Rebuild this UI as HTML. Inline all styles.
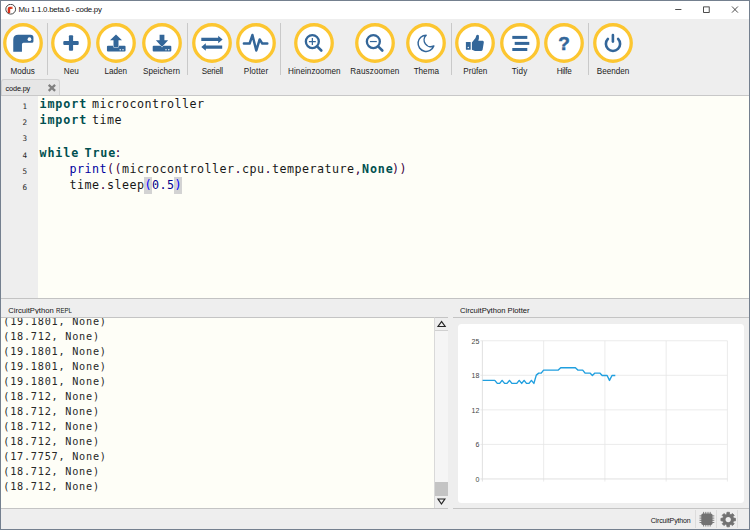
<!DOCTYPE html>
<html lang="de">
<head>
<meta charset="utf-8">
<title>Mu 1.1.0.beta.6 - code.py</title>
<style>
html,body{margin:0;padding:0;}
body{width:750px;height:530px;overflow:hidden;background:#eeeeee;font-family:"Liberation Sans",sans-serif;color:#1a1a1a;position:relative;}
.abs{position:absolute;}
#frame{position:absolute;left:0;top:0;width:748px;height:528px;border:1px solid #74808f;z-index:50;pointer-events:none;}
#titlebar{position:absolute;left:1px;top:1px;width:748px;height:18px;background:#fff;}
#title{position:absolute;left:17.6px;top:3.4px;letter-spacing:-0.256px;font-size:7.9px;line-height:12px;white-space:nowrap;color:#111;}
#toolbar{position:absolute;left:1px;top:19px;width:748px;height:60px;background:#eeeeee;}
.btn{position:absolute;top:4.15px;width:44px;height:56px;}
.btn svg{position:absolute;left:2px;top:0;width:40px;height:40px;overflow:visible;}
.btn span{position:absolute;left:-10px;right:-10px;top:42.6px;text-align:center;font-size:8.15px;line-height:12px;white-space:nowrap;color:#1c1c1c;}
.sep{position:absolute;top:4.4px;width:1px;height:52px;background:#c9c9c9;}
#tabbar{position:absolute;left:1px;top:79px;width:748px;height:17px;}
#tab{position:absolute;left:0.2px;top:0.3px;width:56.6px;height:16px;background:#e6e6e6;border:1px solid #d2d2d2;border-bottom:none;border-radius:3px 3px 0 0;}
#tab span{position:absolute;left:3.4px;top:3.6px;letter-spacing:-0.15px;font-size:7.3px;line-height:10px;color:#111;}
#tabline{position:absolute;left:1px;top:95px;width:748px;height:1px;background:#c8c8c8;}
#editor{position:absolute;left:1px;top:96px;width:748px;height:202px;background:#fefef7;overflow:hidden;}
#margin{position:absolute;left:0;top:0;width:36.7px;height:202px;background:#eeeeee;}
.ln{position:absolute;left:0;width:26.2px;text-align:right;font-family:"DejaVu Sans Mono","Liberation Mono",monospace;font-size:7.6px;line-height:10px;color:#2a2a2a;}
.cl{position:absolute;left:0;height:16.25px;white-space:pre;font-family:"DejaVu Sans Mono","Liberation Mono",monospace;font-size:11.7px;line-height:16.25px;color:#181818;}
.cl span{position:absolute;top:0;letter-spacing:0.457px;}
.cl .k{font-weight:bold;color:#005050;letter-spacing:0.9px;}
.cl .o{color:#400040;}
.cl .n{color:#00008b;}
.cl .h{color:#0000a0;}
.cl .b{color:#0000ff;}
.cl i{position:absolute;top:0.2px;height:16.2px;width:7.5px;background:#d3d3d3;}

#split{position:absolute;left:1px;top:297.7px;width:748px;height:1px;background:#c3c3c3;}
.dtitle{position:absolute;top:305.4px;font-size:7.65px;line-height:12px;white-space:nowrap;color:#141414;height:8.7px;overflow:hidden;}
#repl{position:absolute;left:1px;top:317px;width:433px;height:191.3px;background:#fefef7;border-top:1px solid #c4c4c4;box-sizing:border-box;overflow:hidden;}
.rl{position:absolute;left:2.3px;white-space:pre;font-family:"DejaVu Sans Mono","Liberation Mono",monospace;font-size:10.2px;line-height:15px;height:15px;letter-spacing:0.76px;color:#282828;}
#sbar{position:absolute;left:434px;top:317px;width:13.6px;height:191.3px;background:#f5f5f5;border-top:1px solid #c4c4c4;border-left:1px solid #d9d9d9;box-sizing:border-box;}
#sbar .thumb{position:absolute;left:0;top:164px;width:12.6px;height:14px;background:#c4c4c4;}
#sbar .upb{position:absolute;left:0;top:0;width:12.6px;height:11.5px;background:#eeeeee;border-bottom:1px solid #d0d0d0;}
#sbar .dnb{position:absolute;left:0;top:178.3px;width:12.6px;height:12px;background:#eeeeee;}
#plot{position:absolute;left:452.7px;top:317px;width:296.3px;height:191.3px;background:#eeeeee;border-top:1px solid #c4c4c4;box-sizing:border-box;}
#card{position:absolute;left:5.3px;top:5.6px;width:286.3px;height:179.6px;background:#fff;border-radius:3.5px;}
#status{position:absolute;left:1px;top:508px;width:748px;height:21px;background:#eeeeee;}
#status .line1{position:absolute;left:0;top:0;width:446.8px;height:1px;background:#c4c4c4;}
#status .line2{position:absolute;left:451.7px;top:0;width:296.3px;height:1px;background:#c4c4c4;}
#status .txt{position:absolute;left:649.7px;top:7.2px;letter-spacing:-0.13px;font-size:7px;line-height:12px;white-space:nowrap;color:#141414;}
#status .vs{position:absolute;top:2px;width:1px;height:17.8px;background:#dcdcdc;}
</style>
</head>
<body>
<div id="titlebar">
  <svg class="abs" style="left:4px;top:3px" width="12" height="12" viewBox="0 0 12 12"><circle cx="5.7" cy="5.2" r="4.9" fill="#fff" stroke="#333" stroke-width="0.9"/><path d="M2.7 9V4.7Q2.7 2.7 4.7 2.7H7.6V5.1H5.2V9Z" fill="#d8321c"/><circle cx="7.2" cy="3.9" r="0.55" fill="#f7d9a0"/></svg>
  <div id="title">Mu 1.1.0.beta.6 - code.py</div>
  <svg class="abs" style="left:660px;top:0" width="88" height="18" viewBox="0 0 88 18" fill="none" stroke="#222" stroke-width="0.8"><path d="M14.2 8.5H20.4"/><rect x="42.6" y="5.9" width="5.6" height="5.6"/><path d="M71 5.5L76.9 11.6M76.9 5.5L71 11.6"/></svg>
</div>
<div id="toolbar">
  <div class="btn" style="left:-0.25px"><svg viewBox="0 0 40 40"><circle cx="20" cy="20" r="18.25" fill="#fff" stroke="#fcc630" stroke-width="3.3"/><path d="M10.25 28.85V16.85Q10.25 11.85 15.25 11.85H27.6Q30.45 11.85 30.45 14.7V18.2Q30.45 19.75 28.9 19.75H20.5Q18.95 19.75 18.95 21.3V28.85Z" fill="#336699"/><circle cx="26.45" cy="16.15" r="1.85" fill="#fff"/></svg><span>Modus</span></div>
  <div class="sep" style="left:45.9px"></div>
  <div class="btn" style="left:48.30px"><svg viewBox="0 0 40 40"><circle cx="20" cy="20" r="18.25" fill="#fff" stroke="#fcc630" stroke-width="3.3"/><rect x="12.3" y="17.9" width="15.4" height="4.2" rx="1" fill="#336699"/><rect x="17.9" y="12.3" width="4.2" height="15.4" rx="1" fill="#336699"/></svg><span>Neu</span></div>
  <div class="btn" style="left:92.75px"><svg viewBox="0 0 40 40"><circle cx="20" cy="20" r="18.25" fill="#fff" stroke="#fcc630" stroke-width="3.3"/><rect x="10.95" y="22.85" width="18.6" height="5.7" rx="1" fill="#336699"/><path d="M20 11.45L26 17.15H22.5V24H17.5V17.15H14Z" fill="#336699" stroke="#fff" stroke-width="1" paint-order="stroke"/><circle cx="24.2" cy="26.7" r="0.7" fill="#fff"/><circle cx="27" cy="26.7" r="0.7" fill="#fff"/></svg><span>Laden</span></div>
  <div class="btn" style="left:138.50px"><svg viewBox="0 0 40 40"><circle cx="20" cy="20" r="18.25" fill="#fff" stroke="#fcc630" stroke-width="3.3"/><rect x="10.7" y="22.85" width="18.6" height="5.7" rx="1" fill="#336699"/><path d="M17.6 11.85H22.4V17.15H26.1L20 24.1L13.9 17.15H17.6Z" fill="#336699" stroke="#fff" stroke-width="1" paint-order="stroke"/><circle cx="24" cy="26.7" r="0.7" fill="#fff"/><circle cx="26.8" cy="26.7" r="0.7" fill="#fff"/></svg><span style="letter-spacing:0.05px">Speichern</span></div>
  <div class="sep" style="left:186.1px"></div>
  <div class="btn" style="left:188.60px"><svg viewBox="0 0 40 40"><circle cx="20" cy="20" r="18.25" fill="#fff" stroke="#fcc630" stroke-width="3.3"/><path d="M9.3 14.85H26.2V12.65L30.6 16.45L26.2 20.25V18.05H9.3ZM30.2 22.45H13.8V20.25L9.3 24.05L13.8 27.85V25.65H30.2Z" fill="#336699"/></svg><span style="letter-spacing:-0.2px;padding-left:1.6px">Seriell</span></div>
  <div class="btn" style="left:233.10px"><svg viewBox="0 0 40 40"><circle cx="20" cy="20" r="18.25" fill="#fff" stroke="#fcc630" stroke-width="3.3"/><path d="M7.9 20.55H13.6L16.4 12.05L20.3 27.5L23.7 16.45L26.3 20.55H31.3" fill="none" stroke="#336699" stroke-width="2.5" stroke-linejoin="round" stroke-linecap="round"/></svg><span style="letter-spacing:0.14px">Plotter</span></div>
  <div class="sep" style="left:278.9px"></div>
  <div class="btn" style="left:291.35px"><svg viewBox="0 0 40 40"><circle cx="20" cy="20" r="18.25" fill="#fff" stroke="#fcc630" stroke-width="3.3"/><circle cx="18.35" cy="18.55" r="6.5" fill="none" stroke="#336699" stroke-width="2.3"/><path d="M23.4 23.6L27.3 27.5" stroke="#336699" stroke-width="2.6" stroke-linecap="round"/><path d="M14.9 18.55H21.8M18.35 15.1V22" stroke="#336699" stroke-width="1.2"/></svg><span style="letter-spacing:0.05px">Hineinzoomen</span></div>
  <div class="btn" style="left:351.90px"><svg viewBox="0 0 40 40"><circle cx="20" cy="20" r="18.25" fill="#fff" stroke="#fcc630" stroke-width="3.3"/><circle cx="18.35" cy="18.55" r="6.5" fill="none" stroke="#336699" stroke-width="2.3"/><path d="M23.4 23.6L27.3 27.5" stroke="#336699" stroke-width="2.6" stroke-linecap="round"/><path d="M14.9 18.55H21.8" stroke="#336699" stroke-width="1.2"/></svg><span style="letter-spacing:0.12px">Rauszoomen</span></div>
  <div class="btn" style="left:403.30px"><svg viewBox="0 0 40 40"><circle cx="20" cy="20" r="18.25" fill="#fff" stroke="#fcc630" stroke-width="3.3"/><path d="M20.15 12.2A8.1 8.1 0 1 0 27.8 23A6.7 6.7 0 0 1 20.15 12.2Z" fill="none" stroke="#336699" stroke-width="1.5" stroke-linejoin="round"/></svg><span>Thema</span></div>
  <div class="sep" style="left:449.9px"></div>
  <div class="btn" style="left:452.30px"><svg viewBox="0 0 40 40"><circle cx="20" cy="20" r="18.25" fill="#fff" stroke="#fcc630" stroke-width="3.3"/><rect x="10.9" y="18.9" width="4.8" height="7.8" rx="0.5" fill="#336699"/><circle cx="13.3" cy="24.5" r="0.7" fill="#fff"/><path d="M16.9 19.5L20.5 15L21.3 12.6Q22.6 11 23.9 12.6V15.5L23.3 17.7H27.8Q29.2 18 28.8 19.6L27.6 26.8Q27.2 28.1 26 28.1H20L16.9 26.8Z" fill="#336699"/></svg><span>Prüfen</span></div>
  <div class="btn" style="left:496.70px"><svg viewBox="0 0 40 40"><circle cx="20" cy="20" r="18.25" fill="#fff" stroke="#fcc630" stroke-width="3.3"/><rect x="12.3" y="12.9" width="15" height="3" fill="#336699"/><rect x="14.7" y="18.9" width="14.6" height="3" fill="#336699"/><rect x="12.3" y="25" width="15" height="3" fill="#336699"/></svg><span style="letter-spacing:0.2px">Tidy</span></div>
  <div class="btn" style="left:541.10px"><svg viewBox="0 0 40 40"><circle cx="20" cy="20" r="18.25" fill="#fff" stroke="#fcc630" stroke-width="3.3"/><text x="20" y="26.8" text-anchor="middle" font-family="Liberation Sans, sans-serif" font-weight="bold" font-size="19" fill="#336699" stroke="#336699" stroke-width="0.5">?</text></svg><span style="letter-spacing:-0.3px">Hilfe</span></div>
  <div class="sep" style="left:586.9px"></div>
  <div class="btn" style="left:590.00px"><svg viewBox="0 0 40 40"><circle cx="20" cy="20" r="18.25" fill="#fff" stroke="#fcc630" stroke-width="3.3"/><path d="M14.9 15.9A7.1 7.1 0 1 0 25.1 15.9" fill="none" stroke="#336699" stroke-width="2.6" stroke-linecap="round"/><path d="M19.9 12.1V18.6" stroke="#336699" stroke-width="2.6" stroke-linecap="round"/></svg><span>Beenden</span></div>
</div>
<div id="tabbar"><div id="tab"><span>code.py</span>
<svg class="abs" style="left:44.9px;top:2.6px" width="10" height="10" viewBox="0 0 10 10"><path d="M1.7 1.9L8.1 7.9M8.1 1.9L1.7 7.9" stroke="#808080" stroke-width="2.3" fill="none"/></svg></div></div>
<div id="tabline"></div>
<div id="editor">
  <div id="margin"></div>
  <div class="ln" style="top:5.80px">1</div>
  <div class="cl" style="top:0.00px"><span class="k" style="left:38.50px">import</span><span style="left:91.00px">microcontroller</span></div>
  <div class="ln" style="top:22.05px">2</div>
  <div class="cl" style="top:16.25px"><span class="k" style="left:38.50px">import</span><span style="left:91.00px">time</span></div>
  <div class="ln" style="top:38.30px">3</div>
  <div class="cl" style="top:32.50px"></div>
  <div class="ln" style="top:54.55px">4</div>
  <div class="cl" style="top:48.75px"><span class="k" style="left:38.50px">while</span><span class="k" style="left:83.50px">True</span><span class="o" style="left:113.50px">:</span></div>
  <div class="ln" style="top:70.80px">5</div>
  <div class="cl" style="top:65.00px"><span class="h" style="left:68.50px">print</span><span class="o" style="left:106.00px">((</span><span style="left:121.00px">microcontroller</span><span class="o" style="left:233.50px">.</span><span style="left:241.00px">cpu</span><span class="o" style="left:263.50px">.</span><span style="left:271.00px">temperature</span><span class="o" style="left:353.50px">,</span><span class="k" style="left:361.00px">None</span><span class="o" style="left:391.00px">))</span></div>
  <div class="ln" style="top:87.05px">6</div>
  <div class="cl" style="top:81.25px"><span style="left:68.50px">time</span><span class="o" style="left:98.50px">.</span><span style="left:106.00px">sleep</span><i style="left:143.00px"></i><span class="b" style="left:143.50px">(</span><span class="n" style="left:151.00px">0.5</span><i style="left:173.00px"></i><span class="b" style="left:173.50px">)</span></div>
</div>
<div id="split"></div>
<div class="dtitle" style="left:8.2px">CircuitPython <span style="display:inline-block;transform:scaleX(0.8);transform-origin:0 50%">REPL</span></div>
<div class="dtitle" style="left:460px">CircuitPython Plotter</div>
<div id="repl">
  <div class="rl" style="top:-4.00px">(19.1801, None)</div>
  <div class="rl" style="top:11.00px">(18.712, None)</div>
  <div class="rl" style="top:26.00px">(19.1801, None)</div>
  <div class="rl" style="top:41.00px">(19.1801, None)</div>
  <div class="rl" style="top:56.00px">(19.1801, None)</div>
  <div class="rl" style="top:71.00px">(18.712, None)</div>
  <div class="rl" style="top:86.00px">(18.712, None)</div>
  <div class="rl" style="top:101.00px">(18.712, None)</div>
  <div class="rl" style="top:116.00px">(18.712, None)</div>
  <div class="rl" style="top:131.00px">(17.7757, None)</div>
  <div class="rl" style="top:146.00px">(18.712, None)</div>
  <div class="rl" style="top:161.00px">(18.712, None)</div>
</div>
<div id="sbar"><div class="upb"></div><div class="thumb"></div><div class="dnb"></div>
<svg class="abs" style="left:0;top:0" width="13" height="191" viewBox="0 0 13 191"><path d="M6.6 2.6L11.3 9H1.9ZM6.6 4.46L4.07 7.9H9.13Z" fill="#262626" fill-rule="evenodd"/><path d="M1.9 180.5H11L6.45 186.9ZM4.04 181.6L6.45 184.99L8.86 181.6Z" fill="#262626" fill-rule="evenodd"/></svg></div>
<div id="plot"><div id="card">
<svg class="abs" style="left:0;top:0" width="286" height="180" viewBox="0 0 286 180">
<path d="M85.65 16.75V157.55M146.90 16.75V157.55M208.15 16.75V157.55M269.40 16.75V157.55M22.40 16.75H269.40M22.40 51.30H269.40M22.40 85.85H269.40M22.40 120.40H269.40" stroke="#e6e6e6" stroke-width="0.8" fill="none"/>
<path d="M24.40 16.75V157.55M22.40 154.95H269.40" stroke="#dcdcdc" stroke-width="0.9" fill="none"/>
<path d="M24.6 56.4L36.8 56.4L39.3 59.4L41.7 59.4L44.1 56.4L46.6 59.4L49.0 59.4L51.5 56.4L53.9 59.4L58.8 59.4L61.2 56.4L63.7 59.4L66.1 56.4L68.5 59.4L71.0 59.4L73.4 56.4L75.9 59.4L78.3 51.1L80.7 49.1L83.2 49.1L85.6 46.1L100.3 46.1L102.7 43.7L117.4 43.7L119.8 46.1L124.7 46.1L127.1 49.1L132.0 49.1L134.4 51.5L136.9 49.1L141.8 49.1L144.2 51.5L149.1 51.5L151.5 56.4L154.0 51.5L157.3 51.5" stroke="#209fdf" stroke-width="1.4" fill="none" stroke-linejoin="round"/>
<g font-family="Liberation Sans, sans-serif" font-size="7" fill="#444" text-anchor="end"><text x="21.4" y="19.6">25</text><text x="21.4" y="54.2">18</text><text x="21.4" y="88.8">12</text><text x="21.4" y="123.3">6</text><text x="21.4" y="157.8">0</text></g>
</svg>
</div></div>
<div id="status"><div class="line1"></div><div class="line2"></div><div class="txt">CircuitPython</div>
<svg class="abs" style="left:0;top:0" width="748" height="21" viewBox="0 0 748 21"><g transform="translate(705.9 11.2)"><path d="M-3.30 -7.3V7.3M-7.4 -3.30H7.4M-1.10 -7.3V7.3M-7.4 -1.10H7.4M1.10 -7.3V7.3M-7.4 1.10H7.4M3.30 -7.3V7.3M-7.4 3.30H7.4" stroke="#727272" stroke-width="0.9" fill="none"/><rect x="-5.6" y="-5.7" width="11.2" height="11.4" rx="1.6" fill="#727272"/></g><g transform="translate(727.2 11.55) scale(0.97)"><path d="M-1.47 -5.51L-1.29 -7.49L1.29 -7.49L1.47 -5.51L2.86 -4.93L4.39 -6.21L6.21 -4.39L4.93 -2.86L5.51 -1.47L7.49 -1.29L7.49 1.29L5.51 1.47L4.93 2.86L6.21 4.39L4.39 6.21L2.86 4.93L1.47 5.51L1.29 7.49L-1.29 7.49L-1.47 5.51L-2.86 4.93L-4.39 6.21L-6.21 4.39L-4.93 2.86L-5.51 1.47L-7.49 1.29L-7.49 -1.29L-5.51 -1.47L-4.93 -2.86L-6.21 -4.39L-4.39 -6.21L-2.86 -4.93Z" fill="#727272" stroke="#727272" stroke-width="0.8" stroke-linejoin="round"/><circle r="2.7" fill="#eeeeee"/></g></svg>
<div class="vs" style="left:693.9px"></div><div class="vs" style="left:715px"></div><div class="vs" style="left:736.1px"></div>
</div>
<div id="frame"></div>
</body>
</html>
